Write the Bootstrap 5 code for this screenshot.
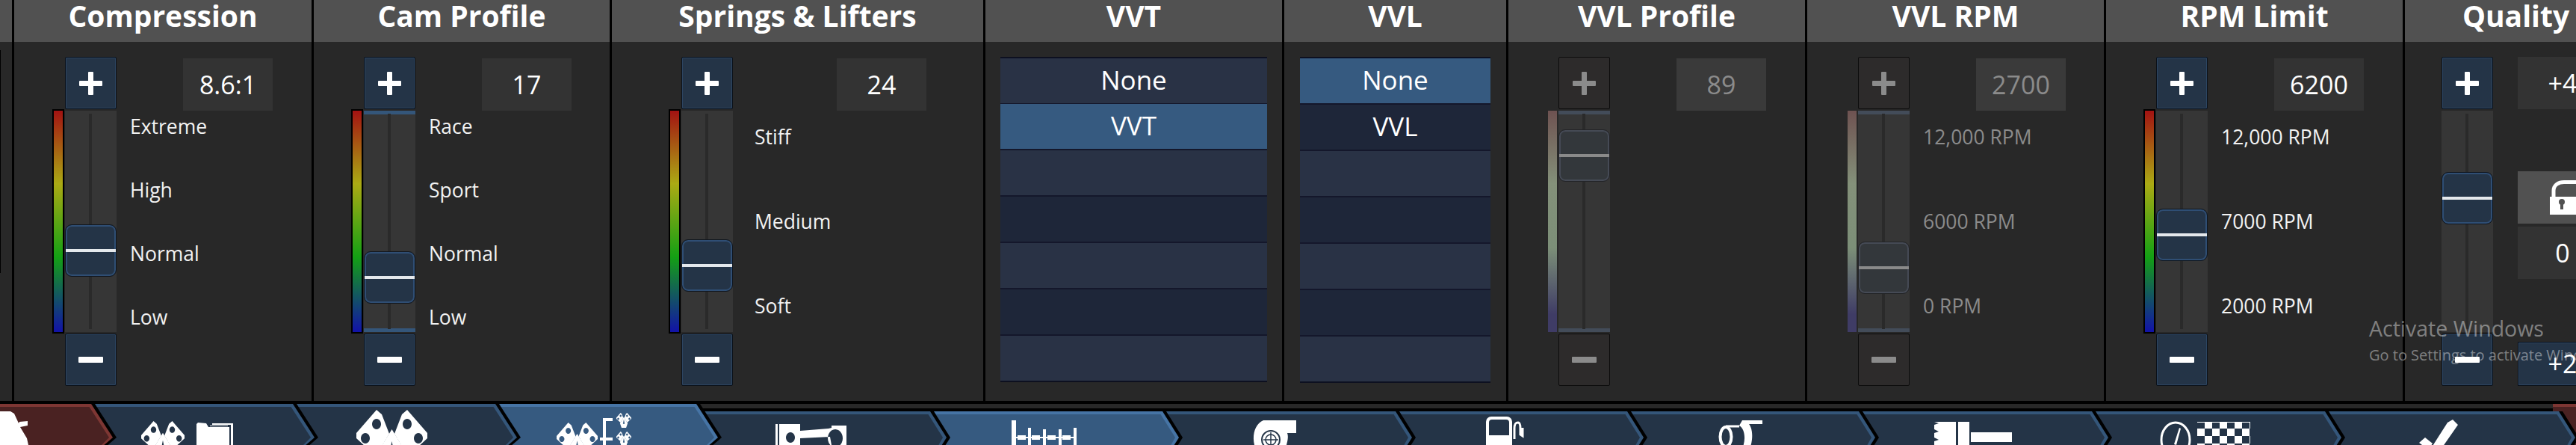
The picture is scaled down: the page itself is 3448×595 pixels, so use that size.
<!DOCTYPE html>
<html lang="en">

<head>
  <meta charset="UTF-8">
  <title>Engine Designer</title>
  <link href="https://cdn.jsdelivr.net/npm/bootstrap@5.3.2/dist/css/bootstrap.min.css" rel="stylesheet" />
  <style>
    html, body { height: 595px; overflow: hidden; background: #000; }
    body { font-family: "Open Sans", "Noto Sans", sans-serif; color: #f0f0f0; position: relative; }

    .panels { height: 536px; gap: 3px; }
    .pane { flex: none; background: #282828; height: 536px; }
    .pane-head { height: 56px; background: #515151; font-size: 39px; line-height: 41px; color: #fff; white-space: nowrap; }
    .pane-sliver { width: 16px; margin-right: 0; }
    .sliver-edge { width: 1px; height: 298px; margin-top: 11px; background: #000; }

    .ctl { padding-top: 20px; }
    .bar-col { width: 17px; padding-top: 70px; flex: none; }
    .heat-bar { width: 16px; height: 300px; border: 2px solid #000; background: linear-gradient(#a31212, #abaa14 33%, #14a014 66%, #1212a8); }
    .heat-bar.is-off { width: 12px; border: 0; height: 296px; margin: 2px 0 0 3px; background: linear-gradient(#6e5251, #84917a 33%, #7c8f78 62%, #3f3c66 92%); }
    .slide-col { width: 69px; flex: none; }
    .step-btn { width: 69px; height: 70px; padding: 0; display: flex; align-items: center; justify-content: center; background: #243447; border: 1px solid #0b1119; border-radius: 2px; box-shadow: inset 0 0 0 1px #2c4562; }
    .step-btn:disabled { background: #2d2b2b; border-color: #0c0c0c; box-shadow: none; opacity: 1; }
    .step-btn:disabled svg { fill: #8b8b8b; }
    .step-btn svg { fill: #fff; }
    .rail { position: relative; height: 296px; margin: 2px 0; background: #363636; }
    .rail::before { content: ""; position: absolute; left: 32px; width: 4px; top: 4px; bottom: 4px; background: #2a2a2a; }
    .rail.has-stops { background: linear-gradient(#34567a 5px, transparent 5px, transparent 291px, #34567a 291px), #363636; }
    .rail.is-off.has-stops { background: linear-gradient(#434c59 5px, transparent 5px, transparent 291px, #434c59 291px), #363636; }
    .thumb { position: absolute; left: 0; width: 69px; height: 70px; background: #243447; border: 1px solid #10161e; border-radius: 9px; box-shadow: inset 0 0 0 2px #2f4e74; }
    .thumb::after { content: ""; position: absolute; left: 0; right: 0; top: 32px; height: 4px; background: #e4e8ec; }
    .thumb.is-off { background: #33373b; border-color: #232427; box-shadow: inset 0 0 0 2px #454a55; }
    .thumb.is-off::after { background: #8a8a8a; }
    .side-col { flex: 1; }
    .read-box { width: 120px; height: 70px; margin-top: 2px; background: #333; font-size: 34px; display: flex; align-items: center; justify-content: center; color: #fff; }
    .read-box.is-off { background: #3a3a3a; color: #8b8b8b; }
    .ticks { height: 296px; padding: 3px 0 2px 18px; display: flex; flex-direction: column; justify-content: space-between; font-size: 26.5px; line-height: 36px; color: #f2f2f2; white-space: nowrap; }
    .ticks.three { padding-top: 17px; padding-bottom: 17px; }
    .ticks.roomy { padding-left: 29px; }
    .ticks.is-off { color: #8b8b8b; }

    .pick-list { margin: 20px 0 0; border-radius: 0; border-top: 2px solid #0d1020; border-bottom: 2px solid #0d1020; }
    .pick-list .list-group-item { height: 62px; padding: 0; border: 0; border-bottom: 2px solid #14172b; border-radius: 0; font-size: 35px; line-height: 58px; text-align: center; color: #fff; background: #293245; }
    .pick-list .list-group-item:last-child { border-bottom: 0; height: 60px; }
    .pick-list .list-group-item.alt { background: #1e2639; }
    .pick-list .list-group-item.active { background: #365a80; }

    .q-col { width: 120px; margin-left: 33px; flex: none; }
    .q-box { width: 120px; height: 70px; background: #333; font-size: 34px; display: flex; align-items: center; justify-content: center; color: #fff; }
    .q-lock { margin-top: 83px; background: #515151; justify-content: flex-start; padding-left: 43px; }
    .q-zero { margin-top: 4px; }
    .q-btn { margin-top: 84px; height: 59px; background: #243447; border: 1px solid #0b1119; box-shadow: inset 0 0 0 1px #2c4562; }

    .tabbar { height: 59px; padding-top: 4px; background: #000; overflow: hidden; }
    .tabstrip { height: 55px; background: linear-gradient(#282828 6px, #000 6px); overflow: hidden; }
    .navtab { --mid: 35px; --run: 22px; position: relative; flex: none; height: 70px; margin-left: -35px; margin-top: 10px; background: #000;
      clip-path: polygon(0 0, calc(100% - var(--run)) 0, 100% var(--mid), calc(100% - var(--run)) 70px, 0 70px); }
    .navtab::before { content: ""; position: absolute; inset: 0 5px 0 0; background: var(--edge, #34567a);
      clip-path: polygon(0 0, calc(100% - var(--run)) 0, 100% var(--mid), calc(100% - var(--run)) 70px, 0 70px); }
    .navtab::after { content: ""; position: absolute; inset: 4px 10px 0 0; background: var(--fill, #243447);
      clip-path: polygon(0 0, calc(100% - var(--run) + 2.5px) 0, 100% calc(var(--mid) - 4px), calc(100% - var(--run)) 70px, 0 70px); }
    .navtab.tall { --mid: 45px; --run: 29px; height: 80px; margin-top: 0; }
    .navtab.on { --edge: #4674a5; --fill: #365a80; }
    .navtab.stop { --edge: #7d3633; --fill: #4a2222; }
    .navtab svg { position: relative; z-index: 1; display: block; fill: #fff; }

    .activate-note { position: absolute; left: 3171px; top: 420px; white-space: nowrap; color: rgba(255, 255, 255, .42); font-size: 28.5px; line-height: 38px; pointer-events: none; }
    .activate-note small { display: block; font-size: 20px; line-height: 28px; margin-top: 3px; }
  </style>
</head>

<body>
  <svg width="0" height="0" class="position-absolute">
    <defs>
      <path id="plusGlyph" d="M14 1h5a1 1 0 0 1 1 1v11h11a1 1 0 0 1 1 1v5a1 1 0 0 1-1 1H20v11a1 1 0 0 1-1 1h-5a1 1 0 0 1-1-1V20H2a1 1 0 0 1-1-1v-5a1 1 0 0 1 1-1h11V2a1 1 0 0 1 1-1z" />
      <symbol id="weights" viewBox="0 0 95 95">
        <path fill-rule="evenodd" d="M27 0l7 6 10 26-18 30L0 38v-7zM27 12a6 7 0 1 0 .01 0zM12 31a6 7 0 1 0 .01 0z" />
        <path fill-rule="evenodd" d="M68 0l-7 6-10 26 18 30 26-24v-7zM68 12a6 7 0 1 1-.01 0zM83 31a6 7 0 1 1-.01 0z" />
        <path fill-rule="evenodd" d="M47.500 26L72 66 62 95H33L23 66zM47.500 42L42 70h11z" />
      </symbol>
      <pattern id="checker" width="20" height="20" patternUnits="userSpaceOnUse">
        <rect width="10" height="10" fill="#fff" />
        <rect x="10" y="10" width="10" height="10" fill="#fff" />
      </pattern>
    </defs>
  </svg>

  <div class="panels d-flex flex-nowrap" id="panels"></div>

  <div class="tabbar">
    <div class="tabstrip d-flex flex-nowrap" id="tabs"></div>
  </div>

  <div class="activate-note">Activate Windows<small>Go to Settings to activate Windows.</small></div>

  <script>
    const plus = '<svg width="33" height="33" viewBox="0 0 33 33"><use href="#plusGlyph"/></svg>';
    const minus = '<svg width="33" height="8" viewBox="0 0 33 8"><rect width="33" height="8" rx="1"/></svg>';
    const lock = '<svg width="47" height="46" viewBox="0 0 47 46"><path d="M0 22h47v24H0z" fill="#fff"/><path d="M5 24V14C5 6 12 2.500 19 2.500h16" fill="none" stroke="#fff" stroke-width="5"/><circle cx="16" cy="29" r="4" fill="#515151"/><rect x="14" y="30" width="4" height="9" fill="#515151"/></svg>';

    const fourTicks = ['Extreme', 'High', 'Normal', 'Low'];
    const panels = [
      { title: 'Compression', w: 398, pad: 51, value: '8.6:1', thumb: 300, ticks: fourTicks },
      { title: 'Cam Profile', w: 396, pad: 50, value: '17', thumb: 336, stops: true, ticks: ['Race', 'Sport', 'Normal', 'Low'] },
      { title: 'Springs &amp; Lifters', w: 497, pad: 76, gap: 139, value: '24', thumb: 320, ticks: ['Stiff', 'Medium', 'Soft'], wide: true },
      { title: 'VVT', w: 397, list: ['None', 'VVT'], sel: 1, mx: 20 },
      { title: 'VVL', w: 297, list: ['None', 'VVL'], sel: 0, mx: 21 },
      { title: 'VVL Profile', w: 397, pad: 50, value: '89', thumb: 173, stops: true, off: true },
      { title: 'VVL RPM', w: 397, pad: 51, value: '2700', thumb: 323, stops: true, off: true, ticks: ['12,000 RPM', '6000 RPM', '0 RPM'] },
      { title: 'RPM Limit', w: 397, pad: 50, value: '6200', thumb: 279, ticks: ['12,000 RPM', '7000 RPM', '2000 RPM'] },
      { title: 'Quality', w: 297, pad: 49, thumb: 230, quality: true }
    ];

    function sliderCol(p) {
      const dis = p.off ? 'disabled' : '';
      const off = p.off ? 'is-off' : '';
      return `<div class="slide-col">
        <button class="btn step-btn" ${dis}>${plus}</button>
        <div class="rail ${off} ${p.stops ? 'has-stops' : ''}"><div class="thumb ${off}" style="top:${p.thumb - 148}px"></div></div>
        <button class="btn step-btn" ${dis}>${minus}</button>
      </div>`;
    }

    function panelBody(p) {
      if (p.list) {
        // rows alternate, only the first two are filled in
        const rows = [0, 1, 2, 3, 4, 5, 6].map(i => {
          let cls = i === p.sel ? 'active' : (i % 2 ? 'alt' : '');
          if (i === 1 && p.sel === 0) cls = 'alt';
          return `<li class="list-group-item ${cls}">${p.list[i] || ''}</li>`;
        }).join('');
        return `<ul class="list-group pick-list" style="margin-left:${p.mx}px;margin-right:${p.mx}px">${rows}</ul>`;
      }
      if (p.quality) {
        return `<div class="ctl d-flex" style="padding-left:${p.pad}px">${sliderCol(p)}
          <div class="q-col">
            <div class="q-box">+4</div>
            <div class="q-box q-lock">${lock}</div>
            <div class="q-box q-zero">0</div>
            <div class="q-box q-btn">+2</div>
          </div></div>`;
      }
      const off = p.off ? 'is-off' : '';
      const ticks = p.ticks || [];
      return `<div class="ctl d-flex" style="padding-left:${p.pad}px">
        <div class="bar-col"><div class="heat-bar ${off}"></div></div>
        ${sliderCol(p)}
        <div class="side-col">
          <div class="read-box ${off}" style="margin-left:${p.gap || 89}px">${p.value}</div>
          <div class="ticks ${off} ${ticks.length === 3 ? 'three' : ''} ${p.wide ? 'roomy' : ''}">${ticks.map(t => `<span>${t}</span>`).join('')}</div>
        </div></div>`;
    }

    document.getElementById('panels').innerHTML =
      '<div class="pane pane-sliver"><div class="pane-head"></div><div class="sliver-edge"></div></div>' +
      panels.map(p => `<section class="pane" style="width:${p.w}px">
        <div class="pane-head text-center fw-bold">${p.title}</div>${panelBody(p)}</section>`).join('');

    // tab icons, x and y are page coordinates of the svg
    const ic = {
      car: { x: 0, y: 550, w: 40, h: 45, svg: '<path d="M0 0h14l5 3 6 13 1-2 11-1v6l-10 2 9 15 2 9H0z"/>' },
      folder: { x: 189, y: 563, w: 127, h: 32, svg: '<use href="#weights" width="58" height="58"/><path d="M74 4V32h44V8H90l-3-5-11-1zM92 6h24v1H92z"/><path d="M120 3v29h3V3H95v2h25z"/>' },
      weights: { x: 477, y: 548, w: 95, h: 47, svg: '<use href="#weights" width="95" height="95"/>' },
      tree: { x: 745, y: 552, w: 100, h: 43, svg: '<use href="#weights" y="13" width="55" height="55"/><path d="M62 7h4v36h-4zM66 7h9v4h-9zM58 33h17v4H58z"/><use href="#weights" x="80" y="0" width="20" height="20"/><use href="#weights" x="80" y="25" width="20" height="20"/>' },
      piston: { x: 1038, y: 566, w: 95, h: 29, svg: '<path fill-rule="evenodd" d="M0 1h3v28H0zM5 1h28v9l38-3 4-1V3h22v8c2 3 2 6 2 9s0 6-1 9H75l-2-11-40 2v9H5zM20 12a6 7 0 1 0 .01 0zM80 8a10 12 0 1 0 .01 0z"/>' },
      crank: { x: 1354, y: 562, w: 87, h: 33, svg: '<path d="M0 0h6v33H0zM22 10h4v23h-4zM42 12h4v21h-4zM63 12h4v21h-4zM83 10h4v23h-4zM8 20h11v6H8zM27 20h11v6H27zM48 20h11v6H48zM68 20h11v6H68zM6 22h77v2H6z"/>' },
      turbo: { x: 1677, y: 561, w: 58, h: 34, svg: '<path d="M14 1h44v17H46c2 5 0 12-1 16H2C-1 22 2 6 14 1z"/><circle cx="24" cy="27" r="12" fill="#fff" stroke="#243447" stroke-width="2"/><circle cx="24" cy="27" r="7" fill="none" stroke="#243447" stroke-width="1.500"/><path d="M24 17v20M14 27h20" stroke="#243447" stroke-width="1.500"/>' },
      pump: { x: 1989, y: 557, w: 58, h: 38, svg: '<path fill-rule="evenodd" d="M7 0h21a7 7 0 0 1 7 7v31H0V7a7 7 0 0 1 7-7zM4 25h27V8a4 4 0 0 0-4-4H8a4 4 0 0 0-4 4z"/><path d="M38 30V16c0-8 3-8 5-8s3 3 3 8v8l3 2V15" fill="none" stroke="#fff" stroke-width="3"/>' },
      exhaust: { x: 2300, y: 562, w: 60, h: 33, svg: '<ellipse cx="10" cy="22" rx="7.500" ry="13" fill="none" stroke="#fff" stroke-width="4"/><path d="M10 8h18M10 36h18" stroke="#fff" stroke-width="3"/><path d="M32 0h27v5H41c5 6 6 20 1 33H32c5-12 4-26-4-31z"/>' },
      brush: { x: 2589, y: 564, w: 104, h: 31, svg: '<path d="M0 0h29v31H0v-5l6-2-6-3v-6l6-2-6-3V4l6-2zM32 0h15v31H32zM49 14h55v13H49z"/>' },
      gauge: { x: 2891, y: 563, w: 122, h: 32, svg: '<ellipse cx="21" cy="25" rx="19" ry="23" fill="none" stroke="#fff" stroke-width="3"/><path d="M26 9l2 1-6 22-3-1z"/><rect x="50" y="2" width="71" height="30" fill="url(#checker)"/><rect x="50" y="1" width="71" height="1" fill="#fff"/>' },
      check: { x: 3238, y: 561, w: 52, h: 34, svg: '<path d="M38 4l7-4 7 7-23 33H15zM0 31l8-7 10 8-6 8z"/>' }
    };

    // right end of every tab, kind, icon
    const tabs = [
      { end: 156, cls: 'tall stop', icon: 'car' },
      { end: 426, cls: 'tall', icon: 'folder' },
      { end: 697, cls: 'tall', icon: 'weights' },
      { end: 966, cls: 'tall on', icon: 'tree' },
      { end: 1272, cls: '', icon: 'piston' },
      { end: 1583, cls: 'on', icon: 'crank' },
      { end: 1895, cls: '', icon: 'turbo' },
      { end: 2205, cls: '', icon: 'pump' },
      { end: 2515, cls: '', icon: 'exhaust' },
      { end: 2827, cls: '', icon: 'brush' },
      { end: 3139, cls: '', icon: 'gauge' },
      { end: 3452, cls: '', icon: 'check' },
      { end: 3560, cls: 'tall stop' }
    ];

    let prev = 0;
    document.getElementById('tabs').innerHTML = tabs.map((t, i) => {
      const left = prev - 35;
      const top = t.cls.includes('tall') ? 540 : 550;
      const g = ic[t.icon];
      const icon = g ? `<svg width="${g.w}" height="${g.h}" viewBox="0 0 ${g.w} ${g.h}" style="margin-left:${g.x - left}px;margin-top:${g.y - top}px">${g.svg}</svg>` : '';
      const html = `<div class="navtab ${t.cls}" style="width:${t.end - left}px;z-index:${50 - i}">${icon}</div>`;
      prev = t.end;
      return html;
    }).join('');
  </script>
  <script src="https://cdn.jsdelivr.net/npm/bootstrap@5.3.2/dist/js/bootstrap.bundle.min.js"></script>
</body>

</html>
